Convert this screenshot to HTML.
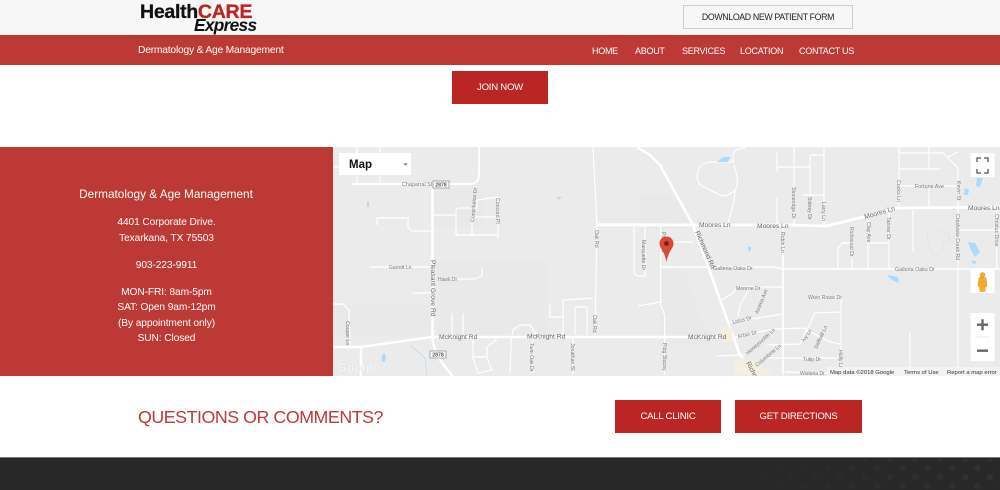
<!DOCTYPE html>
<html><head><meta charset="utf-8">
<style>
*{margin:0;padding:0;box-sizing:border-box}
html,body{width:1000px;height:490px;overflow:hidden;background:#fff;font-family:"Liberation Sans",sans-serif}
.a{position:absolute;white-space:nowrap}
#top{left:0;top:0;width:1000px;height:35px;background:#f7f7f7}
#nav{left:0;top:35px;width:1000px;height:30px;background:#bd3936}
.n{top:45px;color:#fff;font-size:9px;line-height:12px;letter-spacing:-.27px}
.btn{background:#bb2624;color:#fff;font-size:9.6px;letter-spacing:-.25px;display:flex;align-items:center;justify-content:center}
#info{left:0;top:147px;width:333px;height:229px;background:#bd3936}
.c{left:0;width:333px;text-align:center;color:#fff;font-size:10.2px;letter-spacing:-.1px;line-height:14px}
#foot{left:0;top:457px;width:1000px;height:33px;background:#282828;border-top:1.5px solid #777}
#dots{left:740px;top:459px;width:260px;height:31px;background-image:radial-gradient(circle,#323232 0,#323232 3px,transparent 3.6px),radial-gradient(circle,#323232 0,#323232 3px,transparent 3.6px);background-size:25px 18px;background-position:0 0,12.5px 9px;-webkit-mask-image:linear-gradient(90deg,transparent,#000);mask-image:linear-gradient(90deg,transparent,#000)}
</style></head><body>
<div class="a" id="top"></div>
<div class="a" style="left:140px;top:1px;font-size:19.6px;font-weight:bold;letter-spacing:-.33px;line-height:22px;color:#111;-webkit-text-stroke:.3px currentColor">Health<span style="color:#bb2624">CARE</span></div>
<div class="a" style="left:194px;top:16px;font-size:17.3px;font-weight:bold;font-style:italic;letter-spacing:-.7px;line-height:19px;color:#111">Express</div>
<div class="a" style="left:683px;top:5px;width:170px;height:24px;border:1px solid #ccc;font-size:8.8px;letter-spacing:-.36px;color:#222;display:flex;align-items:center;justify-content:center">DOWNLOAD NEW PATIENT FORM</div>
<div class="a" id="nav"></div>
<div class="a" style="left:138px;top:44px;color:#fff;font-size:10.3px;letter-spacing:-.22px;line-height:13px">Dermatology &amp; Age Management</div>
<div class="a n" style="left:592px">HOME</div>
<div class="a n" style="left:635px">ABOUT</div>
<div class="a n" style="left:682px">SERVICES</div>
<div class="a n" style="left:740px">LOCATION</div>
<div class="a n" style="left:799px">CONTACT US</div>
<div class="a btn" style="left:452px;top:71px;width:96px;height:33px">JOIN NOW</div>

<div class="a" id="info"></div>
<div class="a c" style="top:186px;font-size:11.8px;letter-spacing:0;line-height:16px;left:-.5px">Dermatology &amp; Age Management</div>
<div class="a c" style="top:216px">4401 Corporate Drive.</div>
<div class="a c" style="top:232px">Texarkana, TX 75503</div>
<div class="a c" style="top:259px">903-223-9911</div>
<div class="a c" style="top:286px">MON-FRI: 8am-5pm</div>
<div class="a c" style="top:301px">SAT: Open 9am-12pm</div>
<div class="a c" style="top:317px">(By appointment only)</div>
<div class="a c" style="top:332px">SUN: Closed</div>

<svg class="a" style="left:333px;top:147px" width="667" height="229" viewBox="333 147 667 229" font-family="Liberation Sans, sans-serif">
<rect x="333" y="147" width="667" height="229" fill="#ebebeb"/>
<path d="M435 188h47v40h-47zM437 262h110v75H437zM333 305h100v30H333zM640 195h30l25 35h-55zM660 270h25l25 75h-50z" fill="#e9e9e9"/>
<g fill="none" stroke="#fff" stroke-width="1.2">
<path d="M357 147v36M380 147v36M333 167h50"/>
<path d="M377 225v-7h31v9l4 4h20"/>
<path d="M434 215h22M456 235v-23q0-4 4-4h17v-8l21-3M456 235h42M498 197v41M472 235v-20M472 217h26"/>
<path d="M370 267h60M438 279h37l7-3v-9M412 293h20"/>
<path d="M333 304h10l6 6 1 35"/>
<path d="M452 313v22M463 313v22"/>
<path d="M473 338v20l5 15 14-3-5-12M473 357h14v-10l9-7v-3"/>
<path d="M511.500 337l-1.500 36M512 335l1-5 7-5h10l7 10M533 338v35M573 338v37"/>
<path d="M550 303v14h12M563 335v-35l30-2M575 335v-26q0-2 2-2h8q2 0 2 2v26"/>
<path d="M593 147l4 78-2 110M597 224h73"/>
<path d="M634 225v48l3 3h8v-51M660.700 225v80l4 10v60M638 306l22-4M661 267h9M660 242h33"/>
<path d="M746 148c-6 0-11 1-12 5-1 3-1 6-1 9-10 0-24-1-30 2-4 3-6 8-6 12 0 5 2 8 5 10l20 10c5 0 11-3 13-6 3-4 3-10 1-18-1-3-2-5-2-7M735 190l-1 12-6 21"/>
<path d="M777 152v20M777 197v28M778 167h32M794 147v78M810 195v-38q0-2 2-2h12M824 147v78M803 195h22"/>
<path d="M899 147v60M900 153h43l15 15v40M900 169h40M929 147v22M900 186h58M929 186v22M948 157l10-5"/>
<path d="M958 208v167M913 210v42M960 230h40M996.700 208v60"/>
<path d="M852 227v41M868 220v48M870 243h18M889 212v56M838 268v-20l4-5h10"/>
<path d="M722 300l11-7 4-6h46M750 288l-10 17-2 12M730 322l54-8"/>
<path d="M735 337l38-8 30-1 27 14 10 2M767 345l33-1 15-31 25-1"/>
<path d="M808 297h33v78M717 356l26-1M767 358h73M785 372l42 1M910 332v43"/>
</g>
<g fill="none" stroke="#fff">
<path d="M432.500 188v148c0 10 4 22 20 40" stroke-width="2.600"/>
<path d="M352 184h118c6 0 9-4 9-10v-27" stroke-width="2"/>
<path d="M333 347h28l71-10h295" stroke-width="2.400"/>
<path d="M361 347v29" stroke-width="2.400"/>
<path d="M637 147l13 8 10 10 33 60 47 130 17 20" stroke-width="2.600"/>
<path d="M597 225h196l34 1 36-9 34-9 103-1" stroke-width="2.800"/>
<path d="M660 267h113l10 2h217" stroke-width="1.600"/>
<path d="M783 225v150" stroke-width="1.600"/>
</g>
<path d="M927 232l10 0 2-2 4 3 6 1 1 6-6 3-2 8-8 4-5-10z" fill="none" stroke="#e2e2e2" stroke-width=".8"/>
<g fill="#aadaff">
<path d="M717 162l6-5h7l-2 5zM887 275l11 2 1 6-7-3zM968 242l7 1 5 9-5 5-4-7zM972 260l5 2-2 2-3-1zM977 178h6l-3 9-4-1zM965 188l4 2-1 5-4 0zM748 247h3v3l-2 2-1-2zM367 202h2v5h-2zM557 197l5 0-4 3zM384 353c2 2 3 7 0 9-3 0-3-6 0-9z"/>
</g>
<path d="M410 345l15 13 2 17" stroke="#b5dcf7" stroke-width=".8" fill="none"/>
<path d="M720 327l13 1-1 14-9 0zM733 362l10-4 17 7 13 10h-40z" fill="#f5efdf"/>
<g fill="#7a7a7a" font-size="5.400">
<text x="402" y="186">Chaparral St</text>
<text x="389" y="269" font-size="5">Garrett Ln</text>
<text x="438" y="281" font-size="5">Hawk Dr</text>
<text x="713" y="270">Galleria Oaks Dr</text>
<text x="895" y="271">Galleria Oaks Dr</text>
<text x="915" y="188">Fortune Ave</text>
<text x="808" y="299" font-size="5.200">Wren Rowe Dr</text>
<text x="736" y="290" font-size="5.200">Monroe Dr</text>
<text x="803" y="361" font-size="5.200">Tulip Dr</text>
<text x="800" y="375" font-size="5">Wisteria Dr</text>
<g font-size="5.200">
<text transform="translate(733 324) rotate(-14)">Lotus Dr</text>
<text transform="translate(738 338) rotate(-12)">Arbor Dr</text>
<text transform="translate(748 355) rotate(-42)">Honeysuckle Ln</text>
<text transform="translate(757 367) rotate(-40)">Columbine Ln</text>
<text transform="translate(804 342) rotate(-55)">Ivy Ln</text>
<text transform="translate(817 349) rotate(-65)">Daffodil Ln</text>
<text transform="translate(758 314) rotate(-68)">Azalea Ave</text>
<text transform="translate(839 350) rotate(90)">Holly Ln</text>
<text transform="translate(474 222) rotate(-85)">Constitution Dr</text>
<text transform="translate(496 198) rotate(90)">Concord Pl</text>
<text transform="translate(346 321) rotate(90)">Cooper Ln</text>
<text transform="translate(595 230) rotate(90)">Oak Rd</text>
<text transform="translate(593 315) rotate(90)">Oak Rd</text>
<text transform="translate(530 343) rotate(90)">Twin Oak Dr</text>
<text transform="translate(571 343) rotate(90)">Jonathan St</text>
<text transform="translate(663 343) rotate(90)">Pidg Stacey</text>
<text transform="translate(642 240) rotate(90)">Marquette Dr</text>
<text transform="translate(662 232) rotate(90)">Pond Rd</text>
<text transform="translate(792 187) rotate(90)">Stoneridge Dr</text>
<text transform="translate(808 197) rotate(90)">Sidney Dr</text>
<text transform="translate(822 202) rotate(90)">Larry Ln</text>
<text transform="translate(781 232) rotate(90)">Robin Ln</text>
<text transform="translate(850 227) rotate(90)">Richwood Dr</text>
<text transform="translate(867 222) rotate(90)">Clay Ave</text>
<text transform="translate(887 217) rotate(90)">Tanner Dr</text>
<text transform="translate(897 180) rotate(90)">Cooks Ln</text>
<text transform="translate(957 181) rotate(90)">Kevin St</text>
<text transform="translate(956 214) rotate(90)">Crestview Creek Rd</text>
<text transform="translate(995 214) rotate(90)">Christus Drive</text>
</g>
</g>
<g fill="#666" font-size="6.700">
<text x="439" y="339">McKnight Rd</text>
<text x="527" y="338.500">McKnight Rd</text>
<text x="688" y="339">McKnight Rd</text>
<text x="699" y="227">Moores Ln</text>
<text x="757" y="228">Moores Ln</text>
<text x="968" y="210">Moores Ln</text>
<text transform="translate(865 219) rotate(-16)">Moores Ln</text>
<text transform="translate(431 260) rotate(90)">Pleasant Grove Rd</text>
<text transform="translate(695 232) rotate(66)">Richmond Rd</text>
<text transform="translate(746 363) rotate(62)">Richmond</text>
</g>
<rect x="433" y="181" width="16" height="7" fill="#fff" stroke="#888" stroke-width=".7"/>
<text x="441" y="186.600" font-size="5.200" font-weight="bold" fill="#555" text-anchor="middle">2878</text>
<rect x="430" y="351" width="16" height="7" fill="#fff" stroke="#888" stroke-width=".7"/>
<text x="438" y="356.600" font-size="5.200" font-weight="bold" fill="#555" text-anchor="middle">2878</text>
<path d="M666.500 236.500c-4 0-7 3-7 7 0 5 5 7 7 18.500 2-11.500 7-13.500 7-18.500 0-4-3-7-7-7z" fill="#d9483b"/>
<circle cx="666.500" cy="243.500" r="2.400" fill="#7a1d14"/>
<rect x="339" y="153" width="72" height="22" fill="#fff"/>
<text x="349" y="168" font-size="11.500" font-weight="bold" fill="#111">Map</text>
<path d="M403.500 163.500h4l-2 2z" fill="#555"/>
<text x="337" y="372" font-size="12.500" font-weight="bold" fill="#f6f6f6" stroke="#cfcfcf" stroke-width=".5" paint-order="stroke">Google</text>
<rect x="970.500" y="153" width="24" height="24" fill="#fff"/>
<path d="M977 162v-4h4M984 158h4v4M988 169v4h-4M981 173h-4v-4" fill="none" stroke="#555" stroke-width="1.300"/>
<rect x="970.500" y="269" width="24" height="24" fill="#fff"/>
<path d="M982.500 272.500a2.500 2.500 0 1 1-.01 0zM979 277.500h7l1 9h-1.500l-.5 5h-5l-.5-5H978z" fill="#f0ad2c" stroke="#c98a15" stroke-width=".4"/>
<rect x="970.500" y="313" width="24" height="48" fill="#fff"/>
<path d="M977 323.500h11v2.400h-11zM981.300 319.200h2.400v11h-2.400zM977 349.500h11v2.400h-11z" fill="#666"/>
<rect x="975" y="336.500" width="15" height="1" fill="#eee"/>
<rect x="827" y="367" width="173" height="9" fill="#f5f5f5" opacity=".85"/>
<g font-size="5.900" fill="#333">
<text x="830" y="374">Map data ©2018 Google</text>
<text x="904" y="374">Terms of Use</text>
<text x="947" y="374">Report a map error</text>
</g>
</svg>

<div class="a" style="left:138px;top:406px;color:#bd3936;font-size:17.8px;line-height:23px;letter-spacing:-.45px">QUESTIONS OR COMMENTS?</div>
<div class="a btn" style="left:615px;top:400px;width:106px;height:33px">CALL CLINIC</div>
<div class="a btn" style="left:735px;top:400px;width:127px;height:33px">GET DIRECTIONS</div>
<div class="a" id="foot"></div>
<div class="a" id="dots"></div>
</body></html>
